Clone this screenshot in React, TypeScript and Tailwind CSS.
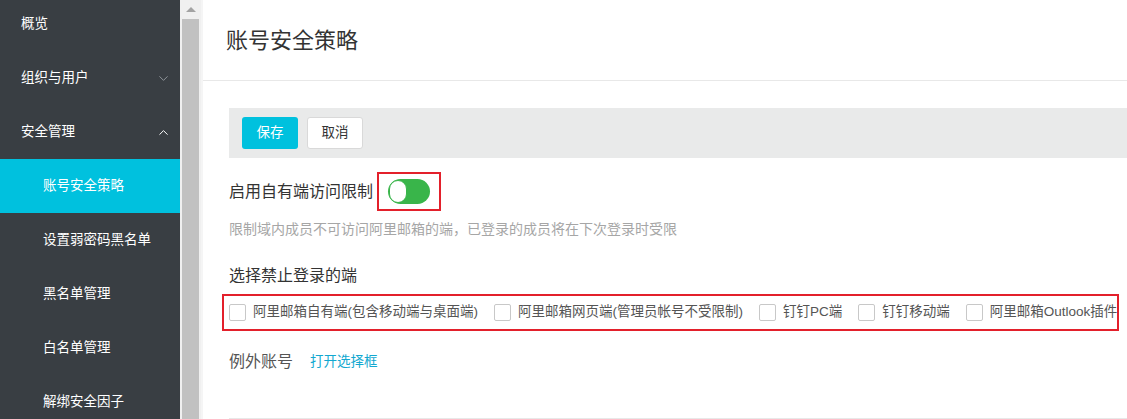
import { ChevronDown, ChevronUp } from "lucide-react";

const font = { fontFamily: '"Liberation Sans", "Noto Sans CJK SC", sans-serif' };

const topItems = [
  { label: "概览" },
  { label: "组织与用户", chevron: "down" },
  { label: "安全管理", chevron: "up" },
];

const subItems = ["账号安全策略", "设置弱密码黑名单", "黑名单管理", "白名单管理", "解绑安全因子"];

const clients = [
  "阿里邮箱自有端(包含移动端与桌面端)",
  "阿里邮箱网页端(管理员帐号不受限制)",
  "钉钉PC端",
  "钉钉移动端",
  "阿里邮箱Outlook插件",
];

const Sidebar = () => (
  <aside className="flex h-full w-[180px] shrink-0 flex-col overflow-hidden bg-[#393e43] text-[13.5px] text-white">
    <div className="-mt-[3px]">
      {topItems.map((item) => (
        <div key={item.label} className="flex h-[54px] items-center justify-between pl-[21px] pr-[9px]">
          <span>{item.label}</span>
          {item.chevron === "down" && <ChevronDown size={15} strokeWidth={1.4} className="text-[#9aa0a6]" />}
          {item.chevron === "up" && <ChevronUp size={15} strokeWidth={1.6} className="text-white" />}
        </div>
      ))}
      {subItems.map((label, i) => (
        <div
          key={label}
          className={
            i === 0
              ? "flex h-[54px] items-center bg-[#00c1de] pl-[43px]"
              : "flex h-[54px] items-center pl-[43px]"
          }
        >
          {label}
        </div>
      ))}
    </div>
  </aside>
);

const Scrollbar = () => (
  <div className="flex h-full w-[21px] shrink-0 flex-col bg-[#f0f0f0]">
    <div className="flex h-[19px] items-center justify-center">
      <div className="h-0 w-0 border-x-[5px] border-b-[5px] border-x-transparent border-b-[#a3a3a3]" />
    </div>
    <div className="ml-[2px] w-[17px] flex-1 bg-[#c1c1c1]" />
  </div>
);

const Toggle = () => (
  <div className="flex h-[25px] w-[42px] items-center rounded-full bg-[#39b54a] px-[1px]">
    <div className="h-[23px] w-[18px] rounded-full border border-[#39b54a] bg-white" />
  </div>
);

export default function App() {
  return (
    <div className="flex h-[419px] w-[1127px] overflow-hidden bg-white" style={font}>
      <Sidebar />
      <Scrollbar />
      <main className="flex min-w-0 flex-1 flex-col border-l-2 border-[#f5f5f5]">
        <header className="flex h-[81px] shrink-0 items-center border-b border-[#e8e8e8] pl-[23px]">
          <h1 className="text-[22px] font-normal text-[#333]">账号安全策略</h1>
        </header>

        <div className="flex flex-col pl-[26px]">
          <div className="mt-[27px] flex h-[50px] items-center gap-[9px] bg-[#e9eaea] pl-[13px]">
            <button
              type="button"
              className="flex h-[32px] w-[56px] items-center justify-center rounded-[3px] bg-[#00c1de] text-[13.5px] text-white"
            >
              保存
            </button>
            <button
              type="button"
              className="flex h-[32px] w-[56px] items-center justify-center rounded-[3px] border border-[#d9d9d9] bg-white text-[13.5px] text-[#333]"
            >
              取消
            </button>
          </div>

          <div className="mt-[14px] flex items-center">
            <span className="text-[16px] text-[#333]">启用自有端访问限制</span>
            <div className="ml-[4px] flex h-[39px] w-[64px] items-center justify-center border-2 border-[#e3202b]">
              <Toggle />
            </div>
          </div>

          <p className="mt-[8px] text-[14px] leading-[20px] text-[#a6a6a6]">
            限制域内成员不可访问阿里邮箱的端，已登录的成员将在下次登录时受限
          </p>

          <div className="mt-[26px] text-[16px] leading-[22px] text-[#333]">选择禁止登录的端</div>

          <div className="-ml-[7px] mt-[7px] flex h-[37px] w-fit items-center gap-[16px] border-2 border-[#e3202b] pl-[5px] pr-[0px]">
            {clients.map((c) => (
              <label key={c} className="flex items-center gap-[7px] text-[13.5px] text-[#555]">
                <span className="h-[17px] w-[17px] rounded-[2px] border border-[#c8c8c8] bg-white" />
                <span>{c}</span>
              </label>
            ))}
          </div>

          <div className="mt-[20px] flex items-center leading-[22px]">
            <span className="w-[81px] text-[16px] text-[#555]">例外账号</span>
            <a className="cursor-pointer text-[13.5px] text-[#12a8d0]">打开选择框</a>
          </div>

          <div className="mt-[45px] border-t border-[#e8e8e8]" />
        </div>
      </main>
    </div>
  );
}
